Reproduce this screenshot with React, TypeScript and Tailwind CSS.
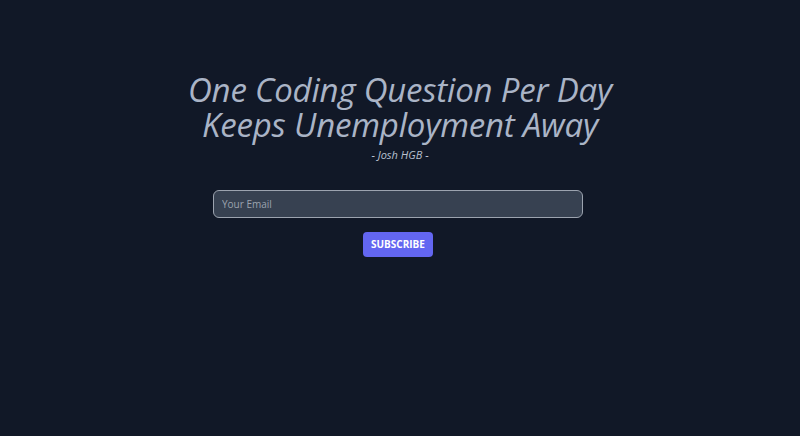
import { useState } from "react";

const App = () => {
  const [email, setEmail] = useState<string>("");

  return (
    <div className="min-h-screen w-full bg-[#111827] font-['Open_Sans',sans-serif]">
      <div className="flex flex-col items-center pt-[72px]">
        <h1 className="text-center text-[33px] italic leading-[35px] text-[#aab4c6] tracking-[-0.2px]">
          One Coding Question Per Day
          <br />
          Keeps Unemployment Away
        </h1>
        <p className="mt-[5px] text-[11px] italic text-[#b8c0cf]">- Josh HGB -</p>

        <form
          className="mt-[26px] flex w-[370px] -translate-x-[2px] flex-col items-center"
          onSubmit={(e) => e.preventDefault()}
        >
          <input
            type="email"
            value={email}
            onChange={(e) => setEmail(e.target.value)}
            placeholder="Your Email"
            className="h-[28px] w-full rounded-md border border-[#9ca3af] bg-[#374151] px-2 text-[10px] text-gray-200 placeholder:text-[#9ca3af] outline-none"
          />
          <button
            type="submit"
            className="mt-[14px] h-[25px] w-[70px] rounded bg-[#6366f1] text-[10px] font-bold text-white"
          >
            SUBSCRIBE
          </button>
        </form>
      </div>
    </div>
  );
};

export default App;
